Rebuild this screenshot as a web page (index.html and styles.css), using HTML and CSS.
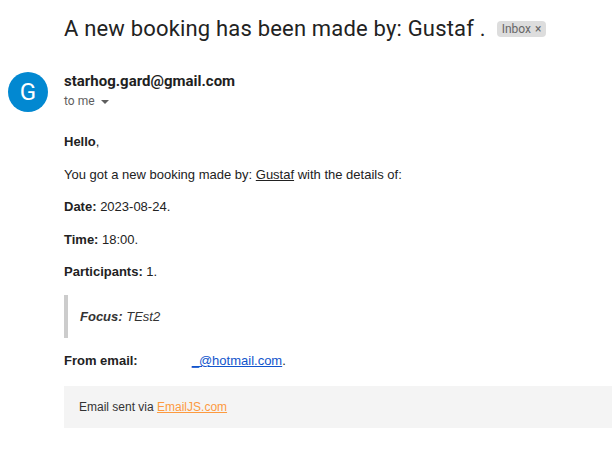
FILE: index.html
```html
<!DOCTYPE html>
<html>
<head>
<meta charset="utf-8">
<link rel="stylesheet" href="styles.css">
</head>
<body>
<div class="page">
  <div class="subject-row">
    <h1 class="subject">A new booking has been made by: Gustaf .</h1>
    <span class="label">Inbox <span class="x">×</span></span>
  </div>
  <div class="message">
    <div class="avatar">G</div>
    <div class="main">
      <div class="sender">starhog.gard@gmail.com</div>
      <div class="to">to me <span class="caret"></span></div>
      <div class="body">
        <p class="p-hello"><b>Hello</b>,</p>
        <p>You got a new booking made by: <u>Gustaf</u> with the details of:</p>
        <p><b>Date:</b> 2023-08-24.</p>
        <p><b>Time:</b> 18:00.</p>
        <p><b>Participants:</b> 1.</p>
        <blockquote class="quote"><i><b>Focus:</b> TEst2</i></blockquote>
        <p class="from"><b>From email:</b><span class="redact"></span><a class="mail">_@hotmail.com</a>.</p>
        <div class="footer">Email sent via <a class="ejs">EmailJS.com</a></div>
      </div>
    </div>
  </div>
</div>
</body>
</html>
```
FILE: styles.css
```css
html, body { margin: 0; padding: 0; background: #fff; }
body { font-family: "Liberation Sans", Arial, sans-serif; color: #222; }
.page { width: 612px; height: 451px; overflow: hidden; }
.subject-row { display: flex; align-items: center; padding: 14px 0 0 64px; height: 28px; }
.subject { margin: 0; font-family: Roboto, "Liberation Sans", sans-serif; font-weight: 400; font-size: 22px; color: #222; letter-spacing: 0.18px; white-space: nowrap; }
.label { margin-left: 11px; background: #ddd; color: #666; font-family: Roboto, "Liberation Sans", sans-serif; font-size: 12px; border-radius: 4px; padding: 0 5px; height: 16px; line-height: 16px; margin-top: 2px; }
.label .x { font-size: 12px; margin-left: 1px; }
.message { display: flex; padding: 30px 0 0 8px; }
.avatar { width: 40px; height: 40px; border-radius: 50%; background: #0288d1; color: #fff; font-family: Roboto, sans-serif; font-size: 24px; display: flex; align-items: center; justify-content: center; flex: none; margin-top: 0; }
.main { margin-left: 16px; flex: 1; }
.sender { font-family: Roboto, "Liberation Sans", sans-serif; font-weight: 700; font-size: 15px; color: #1f1f1f; line-height: 20px; margin-top: -1px; }
.to { font-family: Roboto, "Liberation Sans", sans-serif; font-size: 12px; color: #5e5e5e; line-height: 20px; display: flex; align-items: center; }
.caret { display: inline-block; width: 0; height: 0; border-left: 4px solid transparent; border-right: 4px solid transparent; border-top: 4px solid #5e5e5e; margin-left: 6px; margin-top: 1px; }
.body { font-size: 13px; line-height: 1.5; color: #222; padding-top: 21px; }
.body p { margin: 0 0 13px 0; }
.quote { margin: 0 0 13px 0; border-left: 4px solid #ccc; padding: 12px 0 12px 12px; color: #333; }
.redact { display: inline-block; width: 54px; }
.mail { color: #1155cc; text-decoration: underline; }
.footer { background: #f4f4f4; padding: 11px 15px; height: 20px; line-height: 20px; margin-top: 15px; margin-right: -20px; color: #333; font-size: 12px; }
.ejs { color: #fd9a3f; text-decoration: underline; }
```
